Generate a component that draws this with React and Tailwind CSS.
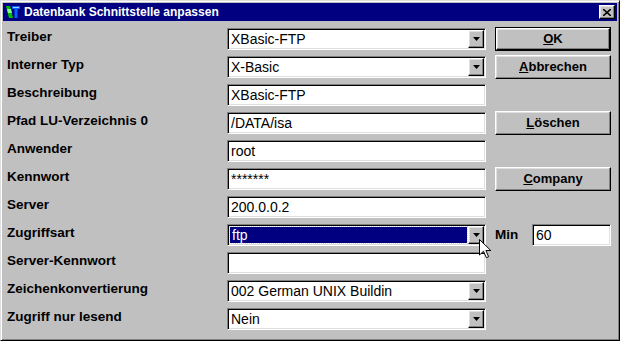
export default function App() {
  const rows = [
    { label: "Treiber", value: "XBasic-FTP", combo: true },
    { label: "Interner Typ", value: "X-Basic", combo: true },
    { label: "Beschreibung", value: "XBasic-FTP" },
    { label: "Pfad LU-Verzeichnis 0", value: "/DATA/isa" },
    { label: "Anwender", value: "root" },
    { label: "Kennwort", value: "*******" },
    { label: "Server", value: "200.0.0.2" },
    { label: "Zugriffsart", value: "ftp", combo: true, selected: true },
    { label: "Server-Kennwort", value: "" },
    { label: "Zeichenkonvertierung", value: "002 German UNIX Buildin", combo: true },
    { label: "Zugriff nur lesend", value: "Nein", combo: true },
  ];

  const sunken =
    "border border-t-[#808080] border-l-[#808080] border-b-white border-r-white shadow-[inset_1px_1px_0_#000,inset_-1px_-1px_0_#dfdfdf] bg-white";
  const raised =
    "bg-[#c0c0c0] border border-t-white border-l-white border-b-black border-r-black shadow-[inset_-1px_-1px_0_#808080,inset_1px_1px_0_#dfdfdf]";

  const right = {
    0: { key: "O", rest: "K", primary: true },
    1: { key: "A", rest: "bbrechen" },
    3: { key: "L", rest: "öschen" },
    5: { key: "C", rest: "ompany" },
  };

  return (
    <div className="w-[620px] h-[341px] bg-[#c0c0c0] font-['Liberation_Sans',Arial,sans-serif] border border-t-[#dfdfdf] border-l-[#dfdfdf] border-b-black border-r-black shadow-[inset_1px_1px_0_#fff,inset_-1px_-1px_0_#808080] p-[2px] flex flex-col relative overflow-hidden">
      {/* title bar */}
      <div className="h-[18px] bg-[#000080] flex items-center pl-[2px] pr-[2px]">
        <svg width="16" height="16" viewBox="0 0 16 16" className="shrink-0">
          <path d="M1 2 L5 2 L8 14 L4 14 Z" fill="#00c000" />
          <path d="M2 5 L6 5 L7 9 L3 9 Z" fill="#80ff80" />
          <path d="M7 2 H15 V5 H12.5 V14 H9.5 V5 H7 Z" fill="#0060ff" />
          <path d="M8 3 H14 V4 H8 Z" fill="#a0d0ff" />
        </svg>
        <span className="ml-[3px] text-white text-[12px] font-bold leading-none">
          Datenbank Schnittstelle anpassen
        </span>
        <div className="flex-1" />
        <div className={`w-[16px] h-[14px] ${raised} flex items-center justify-center`}>
          <svg width="8" height="7" viewBox="0 0 8 7">
            <path d="M0 0 L8 7 M8 0 L0 7" stroke="#000" strokeWidth="1.6" />
          </svg>
        </div>
      </div>

      {/* body */}
      <div className="grid grid-cols-[220px_259px_1fr] auto-rows-[22px] gap-y-[6px] pl-[4px] pt-[7px]">
        {rows.map((r, i) => (
          <Row
            key={i}
            r={r}
            i={i}
            sunken={sunken}
            raised={raised}
            btn={right[i]}
          />
        ))}
      </div>

      {/* mouse pointer */}
      <svg
        width="13"
        height="20"
        viewBox="0 0 13 20"
        className="absolute left-[478px] top-[238px]"
      >
        <path
          d="M0.5 0.5 L0.5 16 L4.5 12.2 L7.3 18.7 L9.6 17.7 L6.9 11.5 L11.8 11.5 Z"
          fill="#fff"
          stroke="#000"
          strokeWidth="1"
        />
      </svg>
    </div>
  );
}

function Row({ r, i, sunken, raised, btn }) {
  return (
    <>
      <div className="text-[13.5px] font-bold text-black flex items-start pt-[1px] leading-[16px]">
        {r.label}
      </div>
      <div className={`${sunken} flex items-stretch p-[1px]`}>
        {r.selected ? (
          <div className="flex-1 p-[1px]">
            <div className="h-full bg-[#000080] outline outline-1 outline-dotted outline-[#e0e0a0] flex items-center px-[2px] text-white text-[14px] leading-none">
              {r.value}
            </div>
          </div>
        ) : (
          <div className="flex-1 flex items-center px-[2px] text-black text-[14px] leading-none">
            {r.value}
          </div>
        )}
        {r.combo && (
          <div className={`w-[16px] ${raised} flex items-center justify-center`}>
            <svg width="7" height="4" viewBox="0 0 7 4">
              <path d="M0 0 H7 L3.5 4 Z" fill="#000" />
            </svg>
          </div>
        )}
      </div>
      <div className="pl-[9px] pr-[5px] flex items-center">
        {btn ? (
          <div
            className={`w-[116px] h-[24px] ${
              btn.primary ? "border border-black" : ""
            } -my-px`}
          >
            <div
              className={`h-full ${raised} flex items-center justify-center text-[13px] font-bold text-black`}
            >
              <span className="underline underline-offset-1">{btn.key}</span>
              {btn.rest}
            </div>
          </div>
        ) : i === 7 ? (
          <div className="flex items-center w-[116px] h-full">
            <span className="text-[13.5px] font-bold text-black w-[37px] self-start pt-[1px]">
              Min
            </span>
            <div className={`${sunken} flex-1 h-full flex items-center px-[3px] text-[14px] text-black`}>
              60
            </div>
          </div>
        ) : null}
      </div>
    </>
  );
}
